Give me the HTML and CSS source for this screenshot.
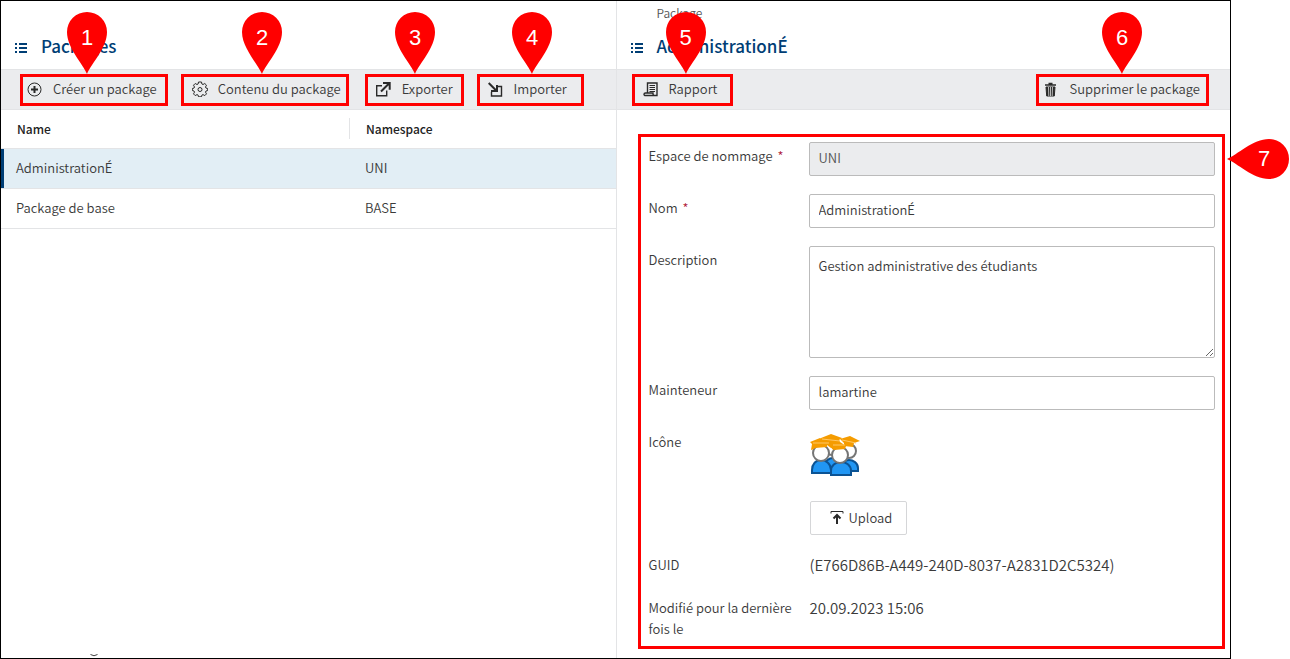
FILE: index.html
```html
<!DOCTYPE html>
<html lang="fr">
<head>
<meta charset="utf-8">
<title>Packages</title>
<link rel="stylesheet" href="styles.css">
</head>
<body>
<main class="frame">
  <section class="pane pane-list">
    <header class="pane-header">
      <svg class="list-icon" viewBox="0 0 12 10" aria-hidden="true"><path d="M0 0h2v2H0zM4 0h8v2H4zM0 4h2v2H0zM4 4h8v2H4zM0 8h2v2H0zM4 8h8v2H4z"/></svg>
      <h1 class="title">Packages</h1>
    </header>
    <div class="toolbar">
      <button class="tool" type="button">
        <svg class="icon" viewBox="0 0 16 16" aria-hidden="true"><circle cx="7.500" cy="8.500" r="6.500"/><path class="thick" d="M7.500 5v7M4 8.500h7"/></svg>
        Créer un package
      </button>
      <button class="tool" type="button">
        <svg class="icon" viewBox="0 0 16 16" aria-hidden="true"><path d="M6.500 1h3l.4 2 1.100.5 1.800-1 1.700 1.700-1 1.800.5 1.100 1.700.4v2l-1.700.5-.5 1.100 1 1.800-1.700 1.700-1.800-1-1.100.5-.4 1.700h-3l-.4-1.700-1.100-.5-1.800 1-1.700-1.700 1-1.800-.5-1.100L.3 9.500v-2L2 7.100 2.500 6l-1-1.800 1.700-1.700 1.800 1L6.100 3z"/><circle cx="8" cy="8.500" r="2"/></svg>
        Contenu du package
      </button>
      <button class="tool" type="button">
        <svg class="icon" viewBox="0 0 16 16" aria-hidden="true"><path class="mid" d="M6 4.700H.7v10h10V9.500"/><path class="thick" d="M5 10.500l8-8M7 2h6.700v6.700"/></svg>
        Exporter
      </button>
      <button class="tool" type="button">
        <svg class="icon" viewBox="0 0 16 16" aria-hidden="true"><path class="mid" d="M3.500 11v4h10V5.500H10"/><path class="thick" d="M.7 2l7.500 7.500M9 4v6H3"/></svg>
        Importer
      </button>
    </div>
    <table class="grid">
      <thead><tr><th class="col-name" scope="col"><span>Name</span></th><th scope="col">Namespace</th></tr></thead>
      <tbody>
        <tr class="selected"><td>AdministrationÉ</td><td>UNI</td></tr>
        <tr><td>Package de base</td><td>BASE</td></tr>
      </tbody>
    </table>
    <svg class="speck" viewBox="0 0 8 3" aria-hidden="true"><path d="M.5 .5Q4 3 7.500 .5"/></svg>

    <div class="mark mark-1"></div>
    <div class="mark mark-2"></div>
    <div class="mark mark-3"></div>
    <div class="mark mark-4"></div>
    <div class="pin pin-1"><svg viewBox="0 0 40 62"><path d="M20 62C16 52 0 36 0 20a20 20 0 0 1 40 0C40 36 24 52 20 62z"/></svg><span>1</span></div>
    <div class="pin pin-2"><svg viewBox="0 0 40 62"><path d="M20 62C16 52 0 36 0 20a20 20 0 0 1 40 0C40 36 24 52 20 62z"/></svg><span>2</span></div>
    <div class="pin pin-3"><svg viewBox="0 0 40 62"><path d="M20 62C16 52 0 36 0 20a20 20 0 0 1 40 0C40 36 24 52 20 62z"/></svg><span>3</span></div>
    <div class="pin pin-4"><svg viewBox="0 0 40 62"><path d="M20 62C16 52 0 36 0 20a20 20 0 0 1 40 0C40 36 24 52 20 62z"/></svg><span>4</span></div>
  </section>

  <section class="pane pane-detail">
    <header class="pane-header">
      <svg class="list-icon" viewBox="0 0 12 10" aria-hidden="true"><path d="M0 0h2v2H0zM4 0h8v2H4zM0 4h2v2H0zM4 4h8v2H4zM0 8h2v2H0zM4 8h8v2H4z"/></svg>
      <div class="heading">
        <p class="kicker">Package</p>
        <h2 class="title">AdministrationÉ</h2>
      </div>
    </header>
    <div class="toolbar">
      <button class="tool" type="button">
        <svg class="icon" viewBox="0 0 16 16" aria-hidden="true"><path class="mid" d="M4.500 12V2h9.500v12.500H2.500c-1 0-1.500-.5-1.500-1.300S1.500 12 2.500 12H10v1c0 1 .500 1.500 1.500 1.500"/><path d="M6.500 4.500h5.500M6.500 6.500h5.500M6.500 8.500h5.500M6.500 10.500h5.500"/></svg>
        Rapport
      </button>
      <button class="tool tool-end" type="button">
        <svg class="icon" viewBox="0 0 16 16" aria-hidden="true"><path class="mid" d="M1 4h11M4.500 2.500h4"/><path class="can" d="M2 6h9l-.7 9H2.700z"/><path class="slots" d="M4.500 6l.3 9M6.500 6v9M8.500 6l-.3 9"/></svg>
        Supprimer le package
      </button>
    </div>
    <form class="form">
      <label for="ns">Espace de nommage <span class="req">*</span></label>
      <input id="ns" type="text" value="UNI" disabled>
      <label for="nom">Nom <span class="req">*</span></label>
      <input id="nom" type="text" value="AdministrationÉ">
      <label for="desc">Description</label>
      <textarea id="desc">Gestion administrative des étudiants</textarea>
      <label for="maint">Mainteneur</label>
      <input id="maint" type="text" value="lamartine">
      <label for="upload">Icône</label>
      <div class="icon-field">
        <svg class="people" viewBox="0 0 50 50" role="img" aria-label="Étudiants">
          <g class="body"><path d="M15 38v-6c0-4 4-7 8-7s8 3 8 7v6z"/><path d="M31 38v-3c0-5 4-8 8-8s9 3 9 8v3z"/></g>
          <g class="head"><circle cx="22" cy="15" r="7"/><circle cx="39" cy="18" r="7"/></g>
          <g class="body"><path d="M2 40v-3c0-6 4-10 9-10s10 4 10 10v3z"/></g>
          <circle class="head" cx="11" cy="20" r="8"/>
          <g class="body"><path d="M21 42v-4c0-6 5-9 10-9s10 3 10 9v4z"/></g>
          <circle class="head" cx="30" cy="22" r="8"/>
          <path class="cap" d="M11 5L21 1l11 4-3 2 4 7-12 1-4-3h-3zM0 9l10-4 10 4-3 1v4l-12 1-1 1-3 1 1-6zM30 6l10-3 10 5-6 2-1 4-9-1v-3zM21 13l9-4 6 4-1 3-11 1-2-1z"/>
          <path class="cap-line" d="M12 6l18 2M3 10h16M32 7l14 3M23 12h12"/>
        </svg>
        <button class="upload" id="upload" type="button">
          <svg class="up-icon" viewBox="0 0 14 14" aria-hidden="true"><path class="tray" d="M1 3.500V1.500h12v2"/><path d="M7 14V5M3.500 8.500L7 5l3.500 3.500"/></svg>
          Upload
        </button>
      </div>
      <span class="plain">GUID</span>
      <output class="plain value">(E766D86B-A449-240D-8037-A2831D2C5324)</output>
      <span class="plain">Modifié pour la dernière fois le</span>
      <output class="plain value">20.09.2023 15:06</output>
    </form>

    <div class="mark mark-5"></div>
    <div class="mark mark-6"></div>
    <div class="mark mark-7"></div>
    <div class="pin pin-5"><svg viewBox="0 0 40 62"><path d="M20 62C16 52 0 36 0 20a20 20 0 0 1 40 0C40 36 24 52 20 62z"/></svg><span>5</span></div>
    <div class="pin pin-6"><svg viewBox="0 0 40 62"><path d="M20 62C16 52 0 36 0 20a20 20 0 0 1 40 0C40 36 24 52 20 62z"/></svg><span>6</span></div>
    <div class="pin pin-7"><svg viewBox="0 0 62 40"><path d="M0 20C10 16 26 0 42 0a20 20 0 0 1 0 40C26 40 10 24 0 20z"/></svg><span>7</span></div>
  </section>
</main>
</body>
</html>
```
FILE: styles.css
```css
* { box-sizing: border-box; }

body {
  margin: 0;
  padding-right: 59px;
  background: #fff;
  color: #3a3a3a;
  font: 350 13px/21px "Noto Sans CJK SC", "Open Sans", sans-serif;
}

button, input, textarea { font: inherit; color: inherit; }
h1, h2, p { margin: 0; }

.frame {
  display: flex;
  min-height: 100vh;
  border: 1px solid #000;
}

.pane { position: relative; min-width: 0; }
.pane-list { flex: 0 0 calc(50% + 1px); border-right: 1px solid #e3e4e6; }
.pane-detail { flex: 1; }

.pane-header {
  display: flex;
  align-items: flex-end;
  gap: 14px;
  height: 68px;
  padding: 0 14px 11px;
}
.list-icon { width: 12px; height: 10px; margin-bottom: 5px; fill: #003e75; }
.title { color: #003e75; font-size: 17px; line-height: 24px; font-weight: 500; }
.kicker { font-size: 12px; line-height: 18px; color: #555; margin-bottom: 12px; }

.toolbar {
  display: flex;
  gap: 35px;
  height: 41px;
  padding: 0 30px 0 26px;
  background: #ebecee;
  border-top: 1px solid #e3e4e6;
  border-bottom: 1px solid #e3e4e6;
}
.tool {
  display: flex;
  align-items: center;
  gap: 10px;
  padding: 0 0 2px;
  border: 0;
  background: none;
  white-space: nowrap;
}
.tool-end { margin-left: auto; }
.icon { width: 16px; height: 16px; fill: none; stroke: #2a2a2a; stroke-width: 1; }
.icon .mid { stroke-width: 1.4; }
.icon .thick { stroke-width: 2; }
.icon .can { fill: #2a2a2a; }
.icon .slots { stroke: #bbb; }

.grid { width: 100%; border-spacing: 0; table-layout: fixed; }
.grid th, .grid td { padding: 0 15px 2px; text-align: left; border-bottom: 1px solid #e3e4e6; }
.grid th { height: 39px; padding-left: 16px; font-size: 12px; font-weight: 500; color: #222; }
.grid td { height: 40px; }
.grid .col-name { width: 349px; padding-right: 0; }
.col-name span { display: block; border-right: 1px solid #e3e4e6; }
.grid .selected { background: #e2eef5; }
.selected td:first-child { box-shadow: inset 3px 0 #003e75; }

.form {
  display: grid;
  grid-template-columns: 160px 1fr;
  row-gap: 18px;
  padding: 32px 15px 10px 32px;
}
.form label { padding: 3px 10px 0 0; }
.req { color: #b0213b; margin-left: 2px; }
.form input, .form textarea {
  display: block;
  width: 100%;
  height: 34px;
  padding: 0 9px 3px;
  border: 1px solid #bbb;
  border-radius: 2px;
  background: #fff;
}
.form input:disabled { background: #ebecee; color: #555; }
.form textarea { height: 112px; padding-top: 8px; resize: vertical; }
.icon-field {
  display: flex;
  flex-direction: column;
  align-items: flex-start;
  gap: 18px;
  padding: 5px 0 0 1px;
}
.people { width: 50px; height: 50px; }
.people .body { fill: #2196f3; stroke: #0b5394; stroke-width: 2; }
.people .head { fill: #fff; stroke: #757575; stroke-width: 2; }
.people .cap { fill: #f59c00; }
.people .cap-line { fill: none; stroke: #ffc766; stroke-width: 1; }
.upload {
  display: flex;
  align-items: center;
  gap: 5px;
  height: 34px;
  padding: 0 14px 2px 19px;
  border: 1px solid #d5d6d8;
  border-radius: 2px;
  background: #fff;
}
.up-icon { width: 14px; height: 14px; fill: none; stroke: #2a2a2a; stroke-width: 2; }
.up-icon .tray { stroke-width: 1; }
.plain { padding: 1px 10px 3px 0; }
.value { padding-left: 1px; font-size: 15px; }

.speck {
  position: absolute;
  left: 89px;
  bottom: 1px;
  width: 8px;
  height: 3px;
  fill: none;
  stroke: #444;
}

/* Numbered callouts drawn over the interface */
.mark { position: absolute; top: 73px; height: 32px; border: 3px solid #f00; pointer-events: none; }
.mark-1 { left: 19px; width: 148px; }
.mark-2 { left: 180px; width: 168px; }
.mark-3 { left: 364px; width: 99px; }
.mark-4 { left: 476px; width: 107px; }
.mark-5 { left: 15px; width: 101px; }
.mark-6 { right: 21px; width: 173px; }
.mark-7 { top: 133px; right: 5px; left: 21px; height: 515px; }

.pin {
  position: absolute;
  top: 11px;
  width: 40px;
  height: 62px;
  color: #fff;
  font: 22px/52px "Liberation Sans", Arial, sans-serif;
  text-align: center;
}
.pin svg { position: absolute; inset: 0; width: 100%; height: 100%; fill: #f00; }
.pin span { position: relative; }
.pin-1 { left: 66px; }
.pin-2 { left: 241px; }
.pin-3 { left: 394px; }
.pin-4 { left: 511px; }
.pin-5 { left: 49px; }
.pin-6 { right: 88px; }
.pin-7 { top: 138px; right: -59px; width: 62px; height: 40px; padding-left: 12px; line-height: 40px; }
```
